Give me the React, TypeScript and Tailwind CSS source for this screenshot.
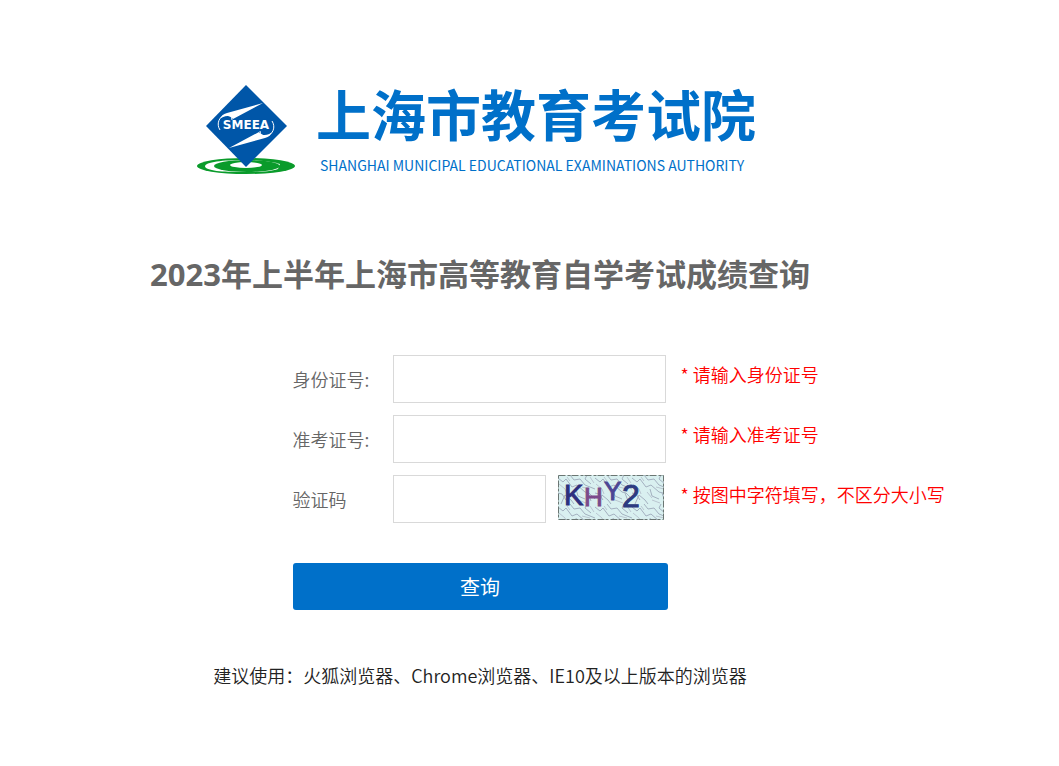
import { useState } from "react";
import type { FormEvent } from "react";

type FieldProps = {
  id: string;
  label: string;
  hint: string;
  value: string;
  onChange: (value: string) => void;
};

const inputClass =
  "h-12 border border-[#d9d9d9] bg-white px-3 text-lg text-[#666] outline-none focus:border-[#0070c9]";

const LogoMark = () => (
  <svg
    viewBox="0 0 100 92"
    className="h-[92px] w-[100px] shrink-0"
    role="img"
    aria-label="SMEEA"
  >
    <ellipse cx="50" cy="82" rx="49" ry="8" fill="#0a9b2b" />
    <path d="M9 82C11 77 32 76 50 76C62 76 74 77 84 80L82 85C74 88 60 88 45 88C28 88 9 87 9 82Z" fill="#fff" />
    <ellipse cx="51" cy="82" rx="33" ry="6" fill="#0a9b2b" />
    <ellipse cx="50" cy="81" rx="16" ry="3" fill="#fff" />
    <path d="M50 1L91 42L50 83L10 42Z" fill="#0056a8" />
    {/* rolled scroll above and below the letters */}
    <path d="M67 19L31 29C27 30 25 32 24 35C27 32 34 30 37 35Z" fill="#fff" />
    <path d="M33 64L69 54C73 53 75 51 76 48C73 51 66 53 63 48Z" fill="#fff" />
    <path
      d="M24 46C20 40 23 32 30 31Q36 31 36 36M76 37C80 43 77 51 70 52Q64 52 64 47"
      fill="none"
      stroke="#fff"
      strokeWidth="1"
    />
    <text
      x="50"
      y="45"
      textAnchor="middle"
      fill="#fff"
      className="font-['DejaVu_Sans',sans-serif] text-[12px] font-bold"
    >
      SMEEA
    </text>
  </svg>
);

const Captcha = () => (
  <svg
    viewBox="0 0 106 45"
    className="h-[45px] w-[106px]"
    role="img"
    aria-label="验证码图片"
  >
    <defs>
      <pattern id="noise" width="37" height="29" patternUnits="userSpaceOnUse">
        <path
          d="M0 3l5 4 3-3 6 8 5-2 8 7 4 1 6 6M3 29l4-9 6 5 3 4M12 0l4 5 6-1 5 6 10 4M0 18l4 1 4 6M18 14l2 7 7 3M29 0l-2 4 6 5M30 18l3 8"
          fill="none"
          stroke="#a3b0bf"
          strokeWidth="1"
        />
        <path
          d="M1 9l6 5 2 5M9 2l3 4M15 17l5 6M24 12l8 2M20 25l8 3M32 2l4 6"
          fill="none"
          stroke="#b9c5d0"
          strokeWidth="1"
        />
      </pattern>
    </defs>
    <rect width="106" height="45" fill="#d9f0f0" />
    <rect width="106" height="45" fill="url(#noise)" />
    <rect
      x="0.5"
      y="0.5"
      width="105"
      height="44"
      fill="none"
      stroke="#6b7673"
      strokeDasharray="7 2 3 1"
    />
    <g className="font-['Liberation_Sans',sans-serif]">
      <text x="6" y="30" fill="#2d2f7d" stroke="#2d2f7d" className="text-[29px]">K</text>
      <text x="26" y="31" fill="#7c4a8b" stroke="#7c4a8b" className="text-[26px]">H</text>
      <text x="46" y="25" fill="#4d4694" stroke="#4d4694" className="text-[26px]">Y</text>
      <text x="64" y="32" fill="#2c3a80" stroke="#2c3a80" className="text-[32px]">2</text>
    </g>
  </svg>
);

const Hint = ({ children }: { children: string }) => (
  <span className="h-12 pt-1.5 text-lg leading-[27px] whitespace-nowrap text-[#f00]">
    * {children}
  </span>
);

const Field = ({ id, label, hint, value, onChange }: FieldProps) => (
  <>
    <label htmlFor={id} className="text-[#666]">
      {label}
    </label>
    <input
      id={id}
      type="text"
      value={value}
      onChange={(e) => onChange(e.target.value)}
      className={`${inputClass} w-full`}
    />
    <Hint>{hint}</Hint>
  </>
);

const App = () => {
  const [idCard, setIdCard] = useState("");
  const [ticket, setTicket] = useState("");
  const [code, setCode] = useState("");

  const handleSubmit = (e: FormEvent) => {
    e.preventDefault();
  };

  return (
    <div className="min-h-screen bg-white font-['Noto_Sans_CJK_SC',sans-serif]">
      <main className="flex w-full max-w-[960px] flex-col items-center pt-[84px] pb-16">
        <header className="flex items-start gap-5 pr-2 text-[#0070c9]">
          <LogoMark />
          <div>
            <p className="text-[55px] leading-[56px] font-bold whitespace-nowrap">
              上海市教育考试院
            </p>
            <p className="pt-[11px] pl-1 text-sm leading-7 whitespace-nowrap">
              SHANGHAI MUNICIPAL EDUCATIONAL EXAMINATIONS AUTHORITY
            </p>
          </div>
        </header>

        <h1 className="mt-[71px] font-['Open_Sans','Noto_Sans_CJK_SC',sans-serif] text-[31px] leading-[48px] font-bold whitespace-nowrap text-[#666]">
          2023年上半年上海市高等教育自学考试成绩查询
        </h1>

        <form onSubmit={handleSubmit} className="mt-[57px] w-[375px]">
          <div className="grid grid-cols-[85px_273px_auto] items-center gap-x-[15px] gap-y-3 text-lg font-[350] whitespace-nowrap">
            <Field
              id="id-card"
              label="身份证号:"
              hint="请输入身份证号"
              value={idCard}
              onChange={setIdCard}
            />
            <Field
              id="ticket"
              label="准考证号:"
              hint="请输入准考证号"
              value={ticket}
              onChange={setTicket}
            />
            <label htmlFor="code" className="text-[#666]">
              验证码
            </label>
            <div className="flex items-start gap-3">
              <input
                id="code"
                type="text"
                value={code}
                onChange={(e) => setCode(e.target.value)}
                className={`${inputClass} w-[153px]`}
              />
              <Captcha />
            </div>
            <Hint>按图中字符填写，不区分大小写</Hint>
          </div>

          <button
            type="submit"
            className="mt-10 h-[47px] w-full cursor-pointer rounded-[3px] bg-[#0070c9] text-xl text-white"
          >
            查询
          </button>
        </form>

        <p className="mt-[51px] text-lg leading-7 font-[350] whitespace-nowrap text-[#222]">
          建议使用：火狐浏览器、Chrome浏览器、IE10及以上版本的浏览器
        </p>
      </main>
    </div>
  );
};

export default App;
